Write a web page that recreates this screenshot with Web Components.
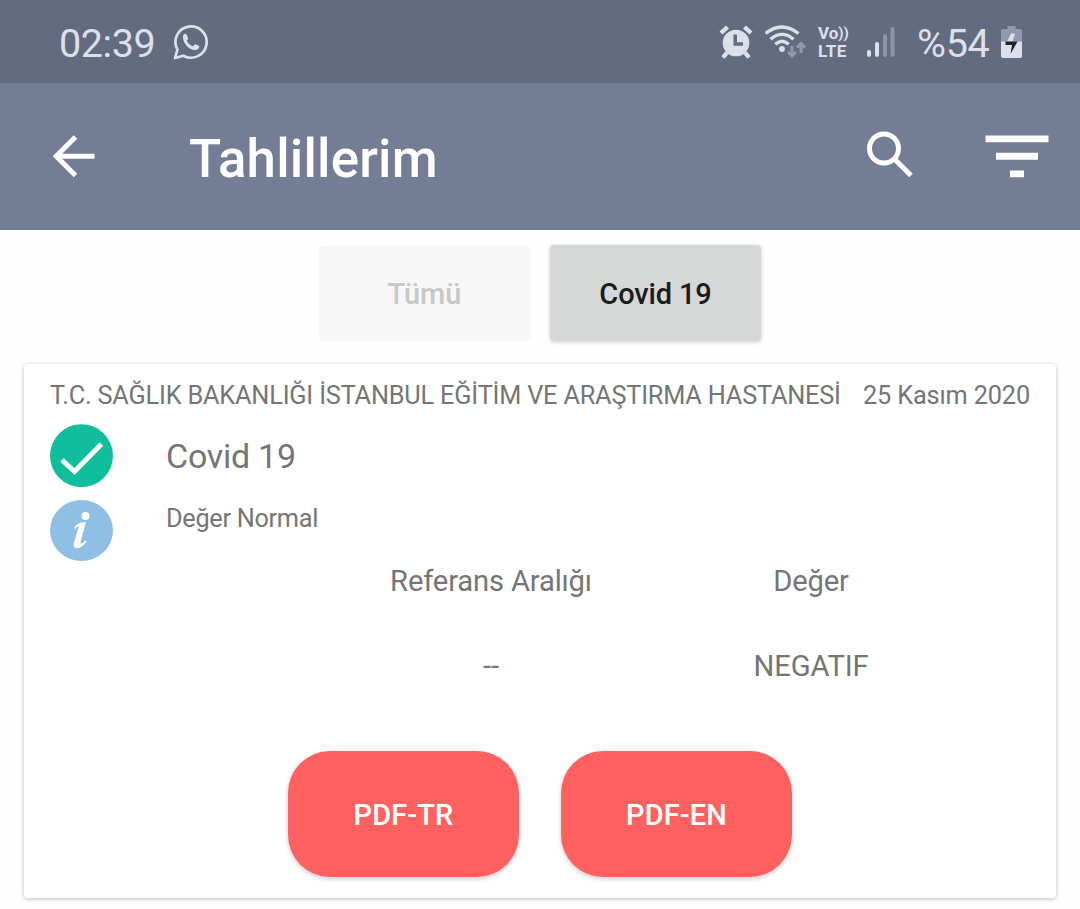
<!DOCTYPE html>
<html lang="tr">
<head>
<meta charset="utf-8">
<title>Tahlillerim</title>
<style>
html,body{margin:0;height:100%;background:#fefefe;overflow:hidden}
body{font-family:Roboto,"Noto Sans",sans-serif;color:#757575}
</style>
</head>
<body>
<results-screen></results-screen>
<script>
const define = (name, html) => customElements.define(name, class extends HTMLElement {
  constructor() {
    super();
    const t = document.createElement('template');
    t.innerHTML = html;
    this.attachShadow({ mode: 'open' }).append(t.content.cloneNode(true));
  }
});

define('status-bar', `
<style>
:host{display:flex;align-items:center;box-sizing:border-box;height:83px;padding:2px 57px 0 59px;background:#626b80;color:#dde0ea}
svg{display:block;flex:none}
.time{font-size:39.5px;letter-spacing:-.4px;width:114px;margin-top:2px}
.wa{margin-top:-1px}
.right{margin-left:auto;display:flex;align-items:center}
.lte{font:700 17px/18px Roboto,sans-serif;width:49px;white-space:nowrap;margin-top:-2px}
.lte div{height:18px}
.vo span{font-size:15px;line-height:1;vertical-align:1px;letter-spacing:0}
.l{letter-spacing:.5px}
.pct{font-size:39.5px;letter-spacing:-.3px;width:83px;white-space:nowrap;margin:2px 1px 0 -1px}
</style>
<span class="time">02:39</span>
<svg class="wa" width="36" height="36" viewBox="0 0 36 36" fill="none" stroke="#dde0ea" stroke-width="2.7"><path d="M2 34 4.4 25.6A15.6 15.6 0 1 1 10.5 31.7Z" stroke-linejoin="round"/><path d="M10 11.6C11.5 8.9 13 9.4 13.7 10.8L15.1 13.9C15.6 15.2 13.7 16 13.8 16.8C15 19.3 17 21.2 19.8 22.2C20.8 22 21.6 20 22.6 20.3L26 22C27.1 22.8 25 26.2 22 26.2C15.5 26 9 18.3 10 11.6Z" fill="#dde0ea" stroke="none"/></svg>
<div class="right">
<svg width="46" height="36" viewBox="0 0 46 36"><circle cx="17" cy="18" r="13.3" fill="#dde0ea"/><path d="M2 8 8.5 2M32 8 25.5 2M8 27.5 4 32.5M26 27.5 30 32.5" stroke="#dde0ea" stroke-width="4.4"/><path d="M16.2 9.5V19H24" fill="none" stroke="#626b80" stroke-width="3.5"/></svg>
<svg width="53" height="36" viewBox="0 0 53 36" fill="none" stroke="#dde0ea"><g stroke-width="3.3"><path d="M.5 8.5Q17-4.5 33.5 8.5M5.5 14.3Q17 4.5 28.5 14.3M10.3 19.3Q17 13.2 23.7 19.3"/></g><circle cx="17" cy="24" r="2.9" fill="#dde0ea" stroke="none"/><path d="M27 21V31M23 27 27 31 31 27M36 28V18.5M32 22.5 36 18.5 40 22.5" stroke="#9299aa" stroke-width="3"/></svg>
<div class="lte"><div class="vo">Vo<span>))</span></div><div class="l">LTE</div></div>
<svg width="51" height="36" viewBox="0 0 51 36" stroke-width="4" stroke-linecap="round"><path d="M2 27V30M10 19V30" stroke="#dde0ea"/><path d="M18 11V30M25.5 4V30" stroke="#8c94a6"/></svg>
<span class="pct">%54</span>
<svg width="22" height="36" viewBox="0 0 22 36"><path d="M6.5 4V1H14.5V4H19Q21 4 21 6V18H0V6Q0 4 2 4Z" fill="#9299aa"/><path d="M0 16.5H21V31Q21 33 19 33H2Q0 33 0 31Z" fill="#dde0ea"/><path d="M10 8.5H14L11.5 16.5H6Z" fill="#dde0ea"/><path d="M4.5 16.5H16.5L9.5 29 11 20H4.5Z" fill="#20232b"/></svg>
</div>`);

define('app-bar', `
<style>
:host{display:flex;align-items:center;box-sizing:border-box;height:147px;padding:0 31px 0 52px;background:#737d95;color:#fff}
svg{display:block;flex:none}
h1{margin:5px auto 0 94px;font-size:52.8px;font-weight:500;line-height:62px;letter-spacing:.2px}
.search{margin:-3px 72px 0 0}
.back{margin-top:-1px}
</style>
<svg class="back" width="43" height="44" viewBox="0 0 43 44" fill="none" stroke="#fff" stroke-width="5"><path d="M42.5 22.2H4M23.5 3 4.2 22.2 23.5 41.4"/></svg>
<h1><slot></slot></h1>
<svg class="search" width="47" height="50" viewBox="0 0 47 50" fill="none" stroke="#fff"><circle cx="18" cy="18.5" r="14.5" stroke-width="5"/><path d="M29.5 30 45 45.5" stroke-width="5"/></svg>
<svg width="64" height="44" viewBox="0 0 64 44" fill="#fff"><path d="M.5 .5H63.5V7.2H.5ZM11 17.7H53V24.7H11ZM25 35.5H39V42.3H25Z"/></svg>`);

define('filter-tab', `
<style>
:host{display:flex;align-items:center;justify-content:center;width:211px;height:95px;border-radius:4px;background:#f7f7f7;color:#c8c8c8;font-size:29px;font-weight:500;letter-spacing:0}
:host([selected]){background:#d6d8d7;color:#1b1c1b;height:96px;margin-top:-1px;letter-spacing:-.15px;box-shadow:0 1px 4px #0003}
span{margin-top:1px}
:host([selected]) span{margin-top:2px}
</style><span><slot></slot></span>`);

define('status-icon', `
<style>:host,svg{display:block}.x{display:none}:host([kind=ok]) .ok,:host([kind=info]) .info{display:block}</style>
<svg class="x ok" width="64" height="64" viewBox="0 0 64 64"><circle cx="31.5" cy="31.7" r="31.5" fill="#10bd9c"/><path d="M12 36 24.5 47.5 51.5 20" fill="none" stroke="#fff" stroke-width="5"/></svg>
<svg class="x info" width="64" height="62" viewBox="0 0 64 62"><ellipse cx="31.5" cy="30.5" rx="31.5" ry="30.5" fill="#8fc0e3"/><circle cx="35.5" cy="16" r="3.9" fill="#fff"/><path d="M24 28C27 23.5 30 22.3 35.9 22L30.5 42C30 44.5 32 44 35.6 40.3L36.7 41.2C33.5 46 30 48.3 26.4 48.3C23.6 47.9 23.4 45.3 24.1 42.5L28.4 27.9C29 25.7 27.2 26 25.2 28.9Z" fill="#fff"/></svg>`);

define('pdf-button', `
<style>
:host{display:flex;align-items:center;justify-content:center;width:231px;height:126px;border-radius:42px;background:#ff6161;color:#fff;font-size:29px;font-weight:500;letter-spacing:.1px;box-shadow:0 2px 5px #0003}
span{margin-top:2px}
</style><span><slot></slot></span>`);

define('result-card', `
<style>
:host{display:flex;flex-direction:column;box-sizing:border-box;width:1032px;height:534px;padding:17px 26px 0;border-radius:4px;background:#fff;box-shadow:0 1px 4px #0004}
.head{display:flex;justify-content:space-between;font-size:25.3px;line-height:30px;white-space:nowrap}
.place{letter-spacing:-.19px}
.date{letter-spacing:-.15px}
.body{display:grid;grid-template-columns:116px 1fr;grid-template-rows:76px 62px;margin-top:13px}
.name{font-size:34px;line-height:40px;margin-top:12px;letter-spacing:-.25px}
.note{font-size:25.3px;line-height:30px;margin-top:4px;letter-spacing:-.3px}
.values{display:grid;grid-template-columns:320px 320px;justify-content:end;grid-template-rows:85px 85px;text-align:center;font-size:29.2px;line-height:36px;letter-spacing:-.17px;margin:1px 59px 0 0}
.actions{display:flex;justify-content:center;gap:42px;margin-top:18px}
</style>
<div class="head"><span class="place"><slot name="place"></slot></span><span class="date"><slot name="date"></slot></span></div>
<div class="body">
<status-icon kind="ok"></status-icon><div class="name"><slot name="name"></slot></div>
<status-icon kind="info"></status-icon><div class="note"><slot name="note"></slot></div>
</div>
<div class="values"><span>Referans Aralığı</span><span>Değer</span><slot name="range"></slot><slot name="value"></slot></div>
<div class="actions"><pdf-button>PDF-TR</pdf-button><pdf-button>PDF-EN</pdf-button></div>`);

define('results-screen', `
<style>
:host{display:block;width:1080px;height:909px}
nav{display:flex;justify-content:center;align-items:flex-start;gap:20px;padding:16px 0 0;height:118px}
result-card{margin:0 auto}
</style>
<status-bar></status-bar>
<app-bar>Tahlillerim</app-bar>
<nav><filter-tab>Tümü</filter-tab><filter-tab selected>Covid 19</filter-tab></nav>
<result-card>
<span slot="place">T.C. SAĞLIK BAKANLIĞI İSTANBUL EĞİTİM VE ARAŞTIRMA HASTANESİ</span>
<span slot="date">25 Kasım 2020</span>
<span slot="name">Covid 19</span>
<span slot="note">Değer Normal</span>
<span slot="range">--</span>
<span slot="value">NEGATIF</span>
</result-card>`);
</script>
</body>
</html>
